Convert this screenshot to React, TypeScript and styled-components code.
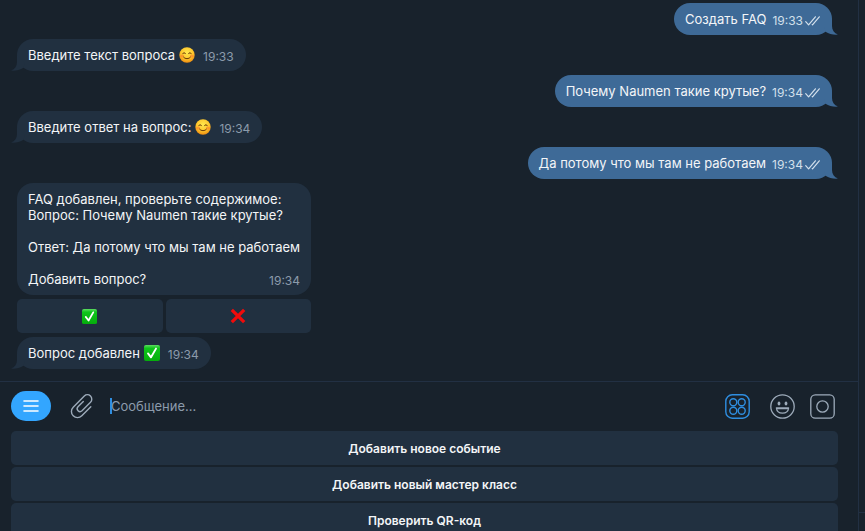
import React from "react";
import styled, { createGlobalStyle, css } from "styled-components";

const color = {
  page: "#18222c",
  panel: "#213040",
  line: "#223043",
  sent: "#3e6a97",
  text: "#f3f5f7",
  muted: "#8c9bab",
  icon: "#9dabba",
  accent: "#2f8ee0",
  menu: "#33a6ff",
};

const GlobalStyle = createGlobalStyle`
  * { box-sizing: border-box; }
  body { margin: 0; background: ${color.page}; }
  button, input { font: inherit; color: inherit; }
`;

const Window = styled.div`
  display: grid;
  grid-template-columns: minmax(0, 1fr) 7px;
  height: 100vh;
  overflow: hidden;
  background: ${color.page};
  color: ${color.text};
  font-family: Inter, "Noto Sans", sans-serif;
  font-size: 13px;
  line-height: 16px;
`;

const Chat = styled.main`
  display: flex;
  flex-direction: column;
`;

const SidePanel = styled.aside`
  display: flex;
  flex-direction: column;
  justify-content: flex-end;
  border-left: 1px solid ${color.line};
`;

const SideFooter = styled.div`
  height: 25px;
  border-top: 1px solid ${color.line};
`;

const Messages = styled.section`
  display: flex;
  flex-direction: column;
  align-items: flex-start;
  gap: 4px;
  padding: 3px 26px 12px 17px;
`;

const Bubble = styled.article<{ $sent?: boolean }>`
  position: relative;
  display: flex;
  align-items: flex-end;
  gap: 8px;
  padding: 8px 12px 8px 11px;
  border-radius: 16px;
  background: ${color.panel};
  ${(p) =>
    p.$sent &&
    css`
      align-self: flex-end;
      gap: 6px;
      background: ${color.sent};
    `}
`;

const BubbleText = styled.p`
  display: flex;
  align-items: center;
  gap: 4px;
  height: 16px;
  margin: 0;
`;

const Stamp = styled.span<{ $sent?: boolean }>`
  display: flex;
  align-items: center;
  gap: 2px;
  font-size: 12px;
  line-height: 12px;
  color: ${(p) => (p.$sent ? "#d3e0ec" : color.muted)};
`;

const TailShape = styled.svg<{ $sent?: boolean }>`
  position: absolute;
  bottom: 0;
  fill: ${(p) => (p.$sent ? color.sent : color.panel)};
  ${(p) => (p.$sent ? css`right: -6px; transform: scaleX(-1);` : css`left: -6px;`)}
`;

const Card = styled.div`
  display: flex;
  flex-direction: column;
  gap: 4px;
`;

const CardBubble = styled(Bubble)`
  flex-direction: column;
  align-items: stretch;
  gap: 0;
  padding-right: 11px;
`;

const CardText = styled.p`
  margin: 0;
  white-space: pre-line;
`;

const CardFooter = styled.div`
  display: flex;
  align-items: flex-end;
  justify-content: space-between;
  padding-top: 16px;
`;

const Choices = styled.div`
  display: grid;
  grid-template-columns: 1fr 1fr;
  gap: 3px;
`;

const PanelButton = styled.button`
  display: flex;
  align-items: center;
  justify-content: center;
  height: 34px;
  flex: none;
  padding: 0;
  border: 0;
  border-radius: 5px;
  background: ${color.panel};
  cursor: pointer;
`;

const CommandButton = styled(PanelButton)`
  padding-top: 2px;
  font-size: 12px;
  font-weight: 600;
`;

const Composer = styled.form`
  display: flex;
  align-items: center;
  padding: 9px 23px 10px 11px;
  border-top: 1px solid ${color.line};
`;

const MenuButton = styled.button`
  display: grid;
  place-items: center;
  width: 40px;
  height: 30px;
  padding: 0;
  border: 0;
  border-radius: 15px;
  background: ${color.menu};
  cursor: pointer;
`;

const IconButton = styled.button<{ $active?: boolean }>`
  display: grid;
  place-items: center;
  padding: 0;
  border: 0;
  background: none;
  color: ${(p) => (p.$active ? color.accent : color.icon)};
  cursor: pointer;
`;

const AttachButton = styled(IconButton)`
  margin: 0 18px 0 19px;
`;

const Field = styled.label`
  position: relative;
  flex: 1;
  display: flex;
  &::before {
    content: "";
    position: absolute;
    left: -1px;
    top: 0;
    width: 2px;
    height: 16px;
    background: ${color.accent};
  }
`;

const MessageInput = styled.input`
  width: 100%;
  height: 16px;
  padding: 0;
  border: 0;
  outline: 0;
  background: none;
  &::placeholder { color: ${color.muted}; opacity: 1; }
`;

const Tools = styled.div`
  display: flex;
  align-items: center;
  gap: 15px;
`;

const ActiveTool = styled(IconButton)`
  margin-right: 5px;
`;

const Keyboard = styled.nav`
  display: flex;
  flex-direction: column;
  gap: 2px;
  padding: 0 20px 0 11px;
`;

const Tail = ({ sent }: { sent?: boolean }) => (
  <TailShape $sent={sent} width="14" height="16" viewBox="0 0 14 16" aria-hidden="true">
    <path d="M6 0V7C6 11 4 14 0 15.600C4.500 16 9 15 12.500 12.700L14 8Z" />
  </TailShape>
);

const Smile = () => (
  <svg width="16" height="16" viewBox="0 0 16 16" role="img" aria-label="😊">
    <defs>
      <radialGradient id="face" cx="50%" cy="35%" r="65%">
        <stop offset="0" stopColor="#ffe94f" />
        <stop offset="0.6" stopColor="#fdc62c" />
        <stop offset="1" stopColor="#ef8c10" />
      </radialGradient>
    </defs>
    <circle cx="8" cy="8" r="7.700" fill="url(#face)" />
    <ellipse cx="3.200" cy="9" rx="2" ry="1.500" fill="#f8762f" opacity=".55" />
    <ellipse cx="12.800" cy="9" rx="2" ry="1.500" fill="#f8762f" opacity=".55" />
    <g fill="none" stroke="#6b3a08" strokeWidth="1" strokeLinecap="round">
      <path d="M3.800 6.700C4.200 5.300 6 5.300 6.400 6.700M9.600 6.700C10 5.300 11.800 5.300 12.200 6.700" />
      <path d="M4.600 10.200C6.200 12.200 9.800 12.200 11.400 10.200" />
    </g>
  </svg>
);

const CheckMark = ({ size }: { size: number }) => (
  <svg width={size} height={size} viewBox="0 0 16 16" role="img" aria-label="✅">
    <defs>
      <linearGradient id="green" x1="0" y1="0" x2="0" y2="1">
        <stop offset="0" stopColor="#5fdc63" />
        <stop offset="0.2" stopColor="#0fc61b" />
        <stop offset="1" stopColor="#05ad0c" />
      </linearGradient>
    </defs>
    <rect width="16" height="16" rx="2" fill="url(#green)" />
    <path d="M4 8.400L7 12.300L12 3.600" fill="none" stroke="#fff" strokeWidth="1.900" strokeLinecap="round" strokeLinejoin="round" />
  </svg>
);

const CrossMark = () => (
  <svg width="16" height="16" viewBox="0 0 16 16" role="img" aria-label="❌">
    <path d="M1.800 1.800L14.200 14.200M14.200 1.800L1.800 14.200" stroke="#f00b0b" strokeWidth="3.300" />
  </svg>
);

const ReadTicks = () => (
  <svg width="15" height="10" viewBox="0 0 15 10" fill="none" stroke="currentColor" strokeWidth="1.200" strokeLinecap="round" strokeLinejoin="round" role="img" aria-label="Прочитано">
    <path d="M.7 5.600L3.600 8.900L10.400 .8M7.200 8.600L7.500 8.900L14.300 .8" />
  </svg>
);

const Clip = () => (
  <svg width="23" height="26" viewBox="0 0 23 26" fill="none" stroke="currentColor" strokeWidth="1.400" strokeLinecap="round" strokeLinejoin="round" aria-hidden="true">
    <path d="M13.300 8.500L8 13.800A2.830 2.830 0 0 0 12 17.800L20.500 9.300A4.380 4.380 0 0 0 14.300 3.100L3.200 14.200A6.080 6.080 0 0 0 11.800 22.800L20.800 13.800" />
  </svg>
);

const KeyboardIcon = () => (
  <svg width="25" height="25" viewBox="0 0 25 25" fill="none" stroke="currentColor" strokeWidth="1.400" aria-hidden="true">
    <rect x=".8" y=".8" width="23.400" height="23.400" rx="6.500" />
    <circle cx="8.300" cy="8.300" r="3.500" />
    <circle cx="16.700" cy="8.300" r="3.500" />
    <circle cx="8.300" cy="16.700" r="3.500" />
    <circle cx="16.700" cy="16.700" r="3.500" />
  </svg>
);

const SmileIcon = () => (
  <svg width="25" height="25" viewBox="0 0 25 25" fill="none" stroke="currentColor" strokeWidth="1.300" strokeLinejoin="round" aria-hidden="true">
    <circle cx="12.500" cy="12.500" r="11.700" />
    <ellipse cx="9" cy="9.500" rx="1.400" ry="1.900" fill="currentColor" stroke="none" />
    <ellipse cx="16" cy="9.500" rx="1.400" ry="1.900" fill="currentColor" stroke="none" />
    <path d="M6.400 14H18.600C18.200 17.400 15.700 19.200 12.500 19.200S6.800 17.400 6.400 14Z" />
    <path d="M6.800 14H18.200L17.800 15.300H7.200Z" fill="currentColor" stroke="none" />
  </svg>
);

const CameraIcon = () => (
  <svg width="25" height="25" viewBox="0 0 25 25" fill="none" stroke="currentColor" strokeWidth="1.300" aria-hidden="true">
    <rect x=".8" y=".8" width="23.400" height="23.400" rx="4.500" />
    <circle cx="12.500" cy="12.500" r="5.700" />
  </svg>
);

type MessageProps = { time: string; sent?: boolean; children: React.ReactNode };

const Message = ({ time, sent, children }: MessageProps) => (
  <Bubble $sent={sent}>
    <Tail sent={sent} />
    <BubbleText>{children}</BubbleText>
    <Stamp $sent={sent}>
      {time}
      {sent && <ReadTicks />}
    </Stamp>
  </Bubble>
);

const summary = `FAQ добавлен, проверьте содержимое:
Вопрос: Почему Naumen такие крутые?

Ответ: Да потому что мы там не работаем`;

const commands = ["Добавить новое событие", "Добавить новый мастер класс", "Проверить QR-код"];

export default function App() {
  return (
    <Window>
      <GlobalStyle />
      <Chat>
        <Messages>
          <Message time="19:33" sent>Создать FAQ</Message>
          <Message time="19:33">Введите текст вопроса <Smile /></Message>
          <Message time="19:34" sent>Почему Naumen такие крутые?</Message>
          <Message time="19:34">Введите ответ на вопрос: <Smile /></Message>
          <Message time="19:34" sent>Да потому что мы там не работаем</Message>
          <Card>
            <CardBubble>
              <CardText>{summary}</CardText>
              <CardFooter>
                <CardText>Добавить вопрос?</CardText>
                <Stamp>19:34</Stamp>
              </CardFooter>
            </CardBubble>
            <Choices>
              <PanelButton type="button" aria-label="Да"><CheckMark size={15} /></PanelButton>
              <PanelButton type="button" aria-label="Нет"><CrossMark /></PanelButton>
            </Choices>
          </Card>
          <Message time="19:34">Вопрос добавлен <CheckMark size={16} /></Message>
        </Messages>
        <Composer onSubmit={(e) => e.preventDefault()}>
          <MenuButton type="button" aria-label="Меню">
            <svg width="16" height="14" viewBox="0 0 16 14" stroke="#fff" strokeWidth="1.600" strokeLinecap="round" aria-hidden="true">
              <path d="M1 2H15M1 7H15M1 12H15" />
            </svg>
          </MenuButton>
          <AttachButton type="button" aria-label="Прикрепить файл"><Clip /></AttachButton>
          <Field>
            <MessageInput type="text" placeholder="Сообщение..." aria-label="Сообщение" />
          </Field>
          <Tools>
            <ActiveTool type="button" $active aria-label="Клавиатура бота"><KeyboardIcon /></ActiveTool>
            <IconButton type="button" aria-label="Эмодзи"><SmileIcon /></IconButton>
            <IconButton type="button" aria-label="Видеосообщение"><CameraIcon /></IconButton>
          </Tools>
        </Composer>
        <Keyboard>
          {commands.map((label) => (
            <CommandButton key={label} type="button">{label}</CommandButton>
          ))}
        </Keyboard>
      </Chat>
      <SidePanel><SideFooter /></SidePanel>
    </Window>
  );
}
